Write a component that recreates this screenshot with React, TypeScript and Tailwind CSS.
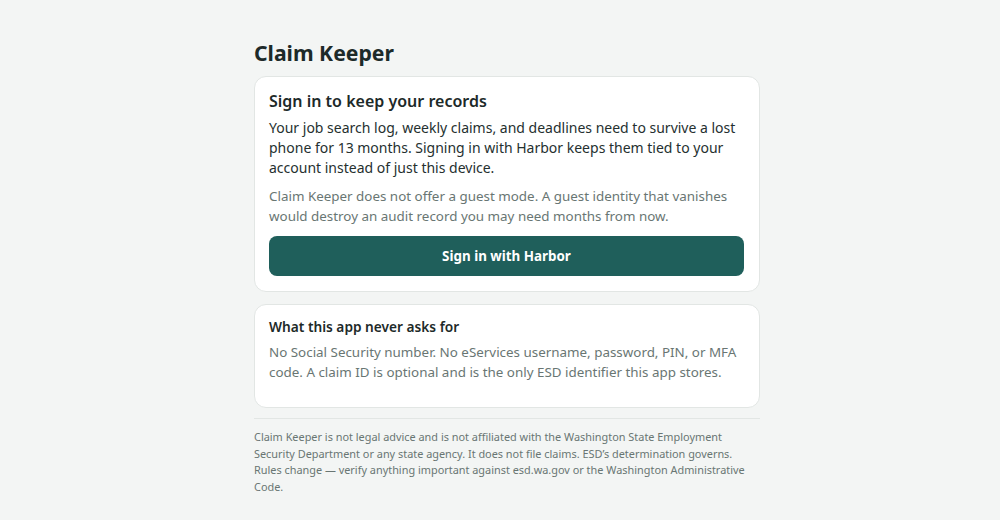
export default function App() {
  return (
    <div
      className="min-h-[520px] w-full bg-[#f3f5f4] text-[#1d2a29]"
      style={{ fontFamily: '"Noto Sans", "Open Sans", sans-serif' }}
    >
      <div className="ml-[254px] w-[506px] pt-[39px] pb-[24px]">
        <h1 className="text-[21.2px] leading-[28px] font-bold text-[#1d2a29]">Claim Keeper</h1>

        <section className="mt-[9px] rounded-[12px] border border-[#e2e6e4] bg-white pl-[14px] pr-[15px] pt-[13px] pb-[15px]">
          <h2 className="text-[16px] leading-[22px] font-semibold text-[#1d2a29]">
            Sign in to keep your records
          </h2>
          <p className="mt-[6px] text-[14px] leading-[20px] text-[#25302f]">
            Your job search log, weekly claims, and deadlines need to survive a lost phone for 13
            months. Signing in with Harbor keeps them tied to your account instead of just this
            device.
          </p>
          <p className="mt-[9px] text-[13.4px] leading-[19.5px] text-[#697673]">
            Claim Keeper does not offer a guest mode. A guest identity that vanishes would destroy
            an audit record you may need months from now.
          </p>
          <button
            type="button"
            className="mt-[10px] flex h-[40px] w-full items-center justify-center rounded-[8px] bg-[#1f5f5b] text-[13.4px] font-bold text-white"
          >
            Sign in with Harbor
          </button>
        </section>

        <section className="mt-[12px] rounded-[12px] border border-[#e2e6e4] bg-white pl-[14px] pr-[15px] pt-[12px] pb-[25px]">
          <h3 className="text-[13.7px] leading-[20px] font-semibold text-[#1d2a29]">
            What this app never asks for
          </h3>
          <p className="mt-[5px] text-[13.4px] leading-[20px] text-[#697673]">
            No Social Security number. No eServices username, password, PIN, or MFA code. A claim
            ID is optional and is the only ESD identifier this app stores.
          </p>
        </section>

        <footer className="mt-[10px] border-t border-[#e2e6e4] pt-[10px]">
          <p className="text-[10.9px] leading-[16.5px] text-[#697673]">
            Claim Keeper is not legal advice and is not affiliated with the Washington State
            Employment Security Department or any state agency. It does not file claims. ESD’s
            determination governs. Rules change — verify anything important against esd.wa.gov or
            the Washington Administrative Code.
          </p>
        </footer>
      </div>
    </div>
  );
}
